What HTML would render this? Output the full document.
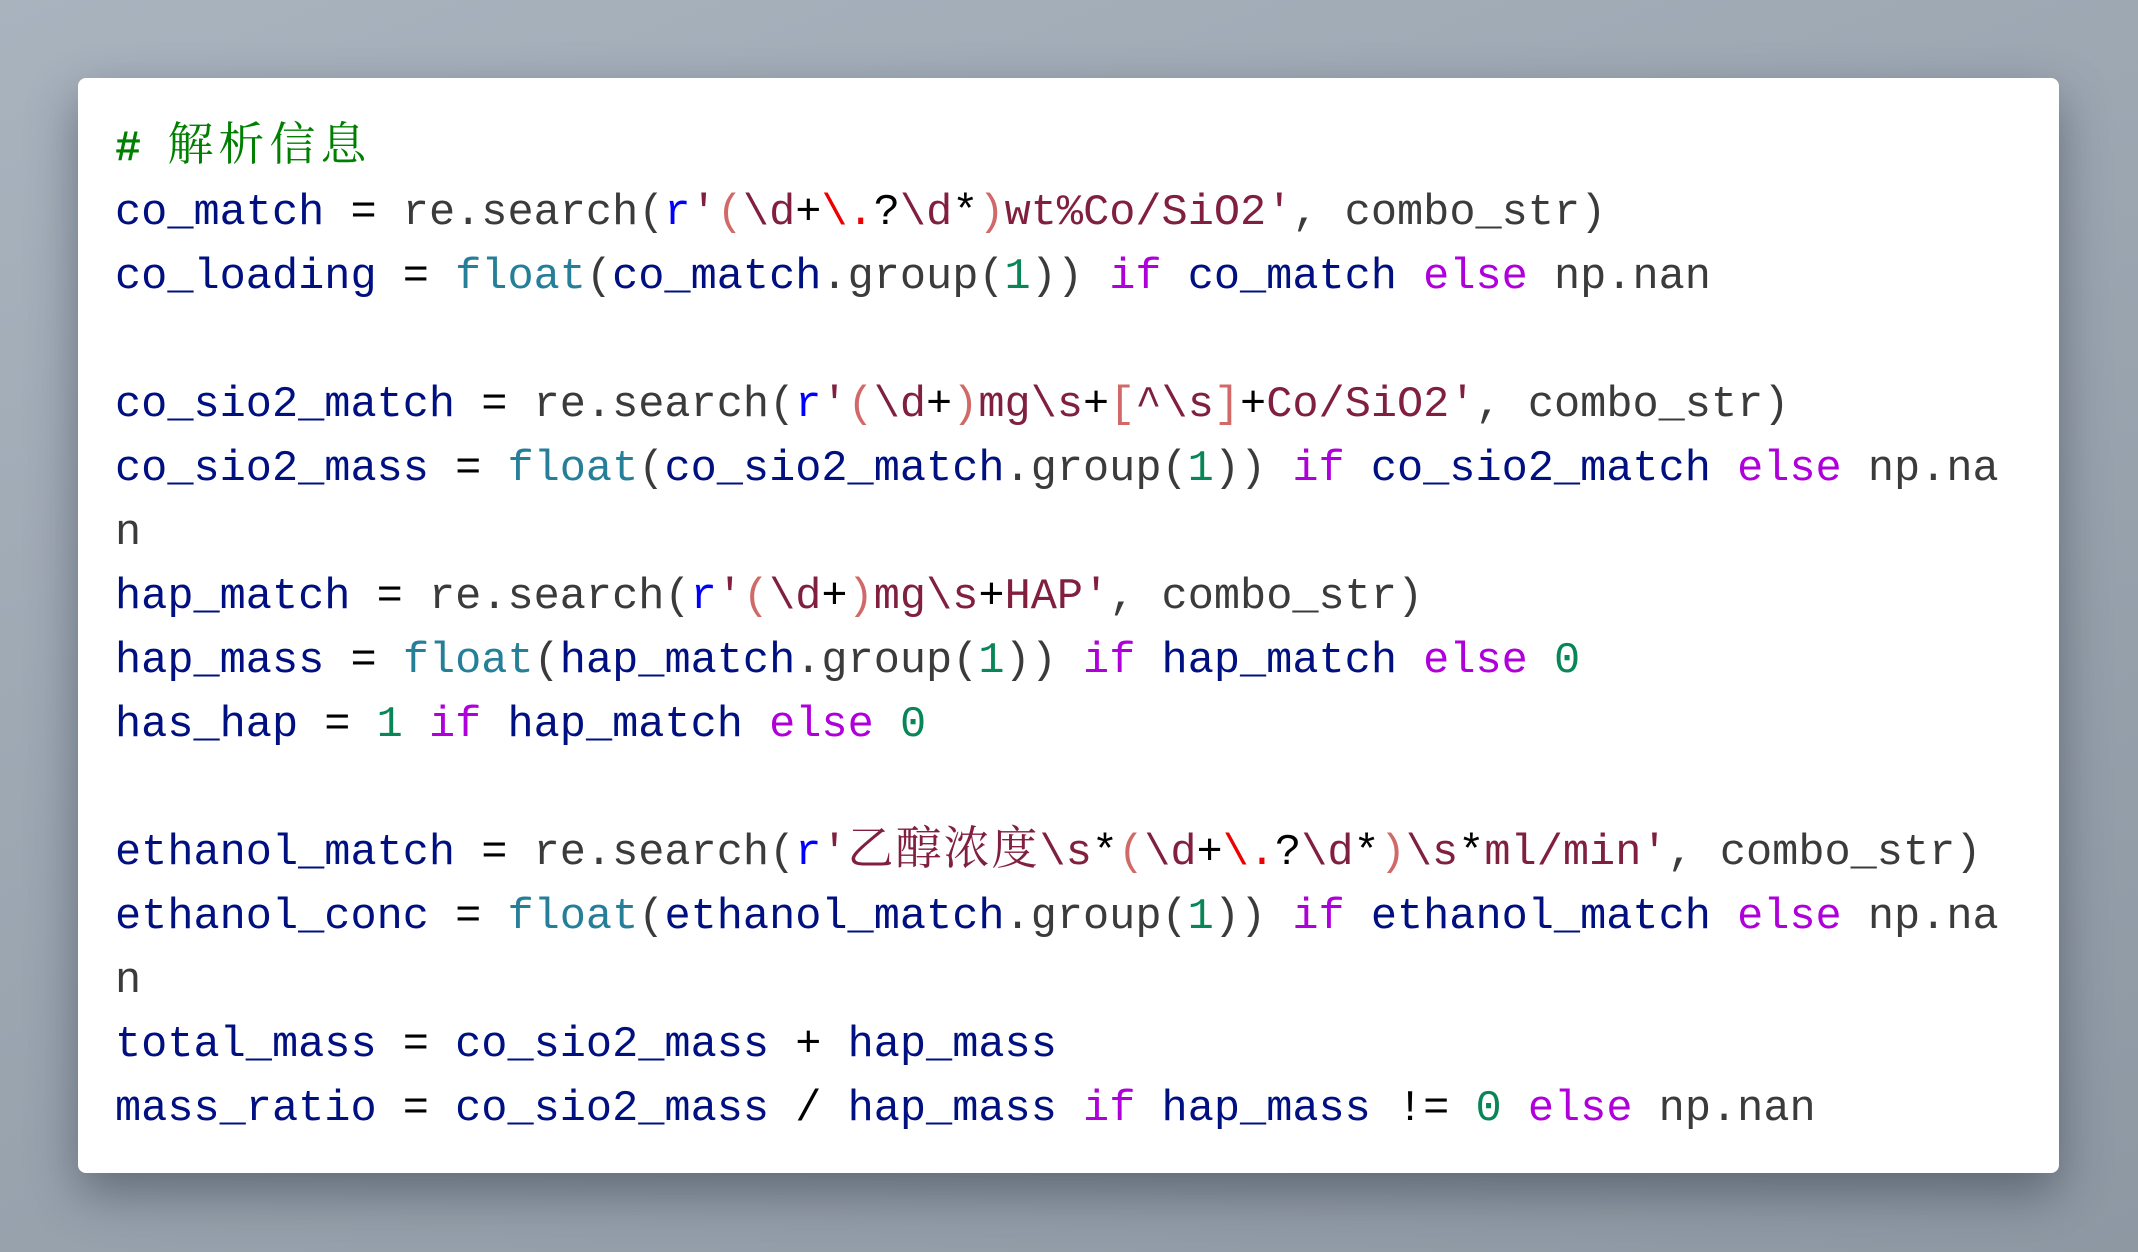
<!DOCTYPE html>
<html><head><meta charset="utf-8"><style>
html,body{margin:0;padding:0;}
body{width:2138px;height:1252px;background:linear-gradient(160deg,#a9b3be 0%,#9ba5b0 50%,#8e98a3 100%);position:relative;overflow:hidden;}
.card{position:absolute;left:78px;top:78px;width:1981px;height:1095px;background:#fff;border-radius:8px;box-shadow:0 20px 50px rgba(30,40,55,.45);}
pre{margin:0;position:absolute;left:115px;top:118px;font-family:"Liberation Mono","Noto Sans CJK SC",monospace;font-size:43.6px;line-height:64px;color:#3b3b3b;white-space:pre;}
.cj{font-family:"Noto Serif CJK SC",serif;letter-spacing:2px;font-size:46px;line-height:0;}
.c{color:#008000}.v{color:#001080}.o{color:#000}.f{color:#267f99}.n{color:#098658}.k{color:#af00db}.r{color:#0000ff}.p{color:#d16969}.s{color:#811f3f}.e{color:#ee0000}
</style></head><body><div class="card"></div>
<pre><span class="c"><b># </b><span class="cj" style="letter-spacing:5px">解析信息</span></span>
<span class="v">co_match</span> <span class="o">=</span> re.search(<span class="r">r</span><span class="s">'</span><span class="p">(</span><span class="s">\d</span><span class="o">+</span><span class="e">\.</span><span class="o">?</span><span class="s">\d</span><span class="o">*</span><span class="p">)</span><span class="s">wt%Co/SiO2'</span>, combo_str)
<span class="v">co_loading</span> <span class="o">=</span> <span class="f">float</span>(<span class="v">co_match</span>.group(<span class="n">1</span>)) <span class="k">if</span> <span class="v">co_match</span> <span class="k">else</span> np.nan

<span class="v">co_sio2_match</span> <span class="o">=</span> re.search(<span class="r">r</span><span class="s">'</span><span class="p">(</span><span class="s">\d</span><span class="o">+</span><span class="p">)</span><span class="s">mg\s</span><span class="o">+</span><span class="p">[</span><span class="s">^\s</span><span class="p">]</span><span class="o">+</span><span class="s">Co/SiO2'</span>, combo_str)
<span class="v">co_sio2_mass</span> <span class="o">=</span> <span class="f">float</span>(<span class="v">co_sio2_match</span>.group(<span class="n">1</span>)) <span class="k">if</span> <span class="v">co_sio2_match</span> <span class="k">else</span> np.na
n
<span class="v">hap_match</span> <span class="o">=</span> re.search(<span class="r">r</span><span class="s">'</span><span class="p">(</span><span class="s">\d</span><span class="o">+</span><span class="p">)</span><span class="s">mg\s</span><span class="o">+</span><span class="s">HAP'</span>, combo_str)
<span class="v">hap_mass</span> <span class="o">=</span> <span class="f">float</span>(<span class="v">hap_match</span>.group(<span class="n">1</span>)) <span class="k">if</span> <span class="v">hap_match</span> <span class="k">else</span> <span class="n">0</span>
<span class="v">has_hap</span> <span class="o">=</span> <span class="n">1</span> <span class="k">if</span> <span class="v">hap_match</span> <span class="k">else</span> <span class="n">0</span>

<span class="v">ethanol_match</span> <span class="o">=</span> re.search(<span class="r">r</span><span class="s">'<span class="cj">乙醇浓度</span>\s</span><span class="o">*</span><span class="p">(</span><span class="s">\d</span><span class="o">+</span><span class="e">\.</span><span class="o">?</span><span class="s">\d</span><span class="o">*</span><span class="p">)</span><span class="s">\s</span><span class="o">*</span><span class="s">ml/min'</span>, combo_str)
<span class="v">ethanol_conc</span> <span class="o">=</span> <span class="f">float</span>(<span class="v">ethanol_match</span>.group(<span class="n">1</span>)) <span class="k">if</span> <span class="v">ethanol_match</span> <span class="k">else</span> np.na
n
<span class="v">total_mass</span> <span class="o">=</span> <span class="v">co_sio2_mass</span> <span class="o">+</span> <span class="v">hap_mass</span>
<span class="v">mass_ratio</span> <span class="o">=</span> <span class="v">co_sio2_mass</span> <span class="o">/</span> <span class="v">hap_mass</span> <span class="k">if</span> <span class="v">hap_mass</span> <span class="o">!=</span> <span class="n">0</span> <span class="k">else</span> np.nan</pre>
</body></html>
